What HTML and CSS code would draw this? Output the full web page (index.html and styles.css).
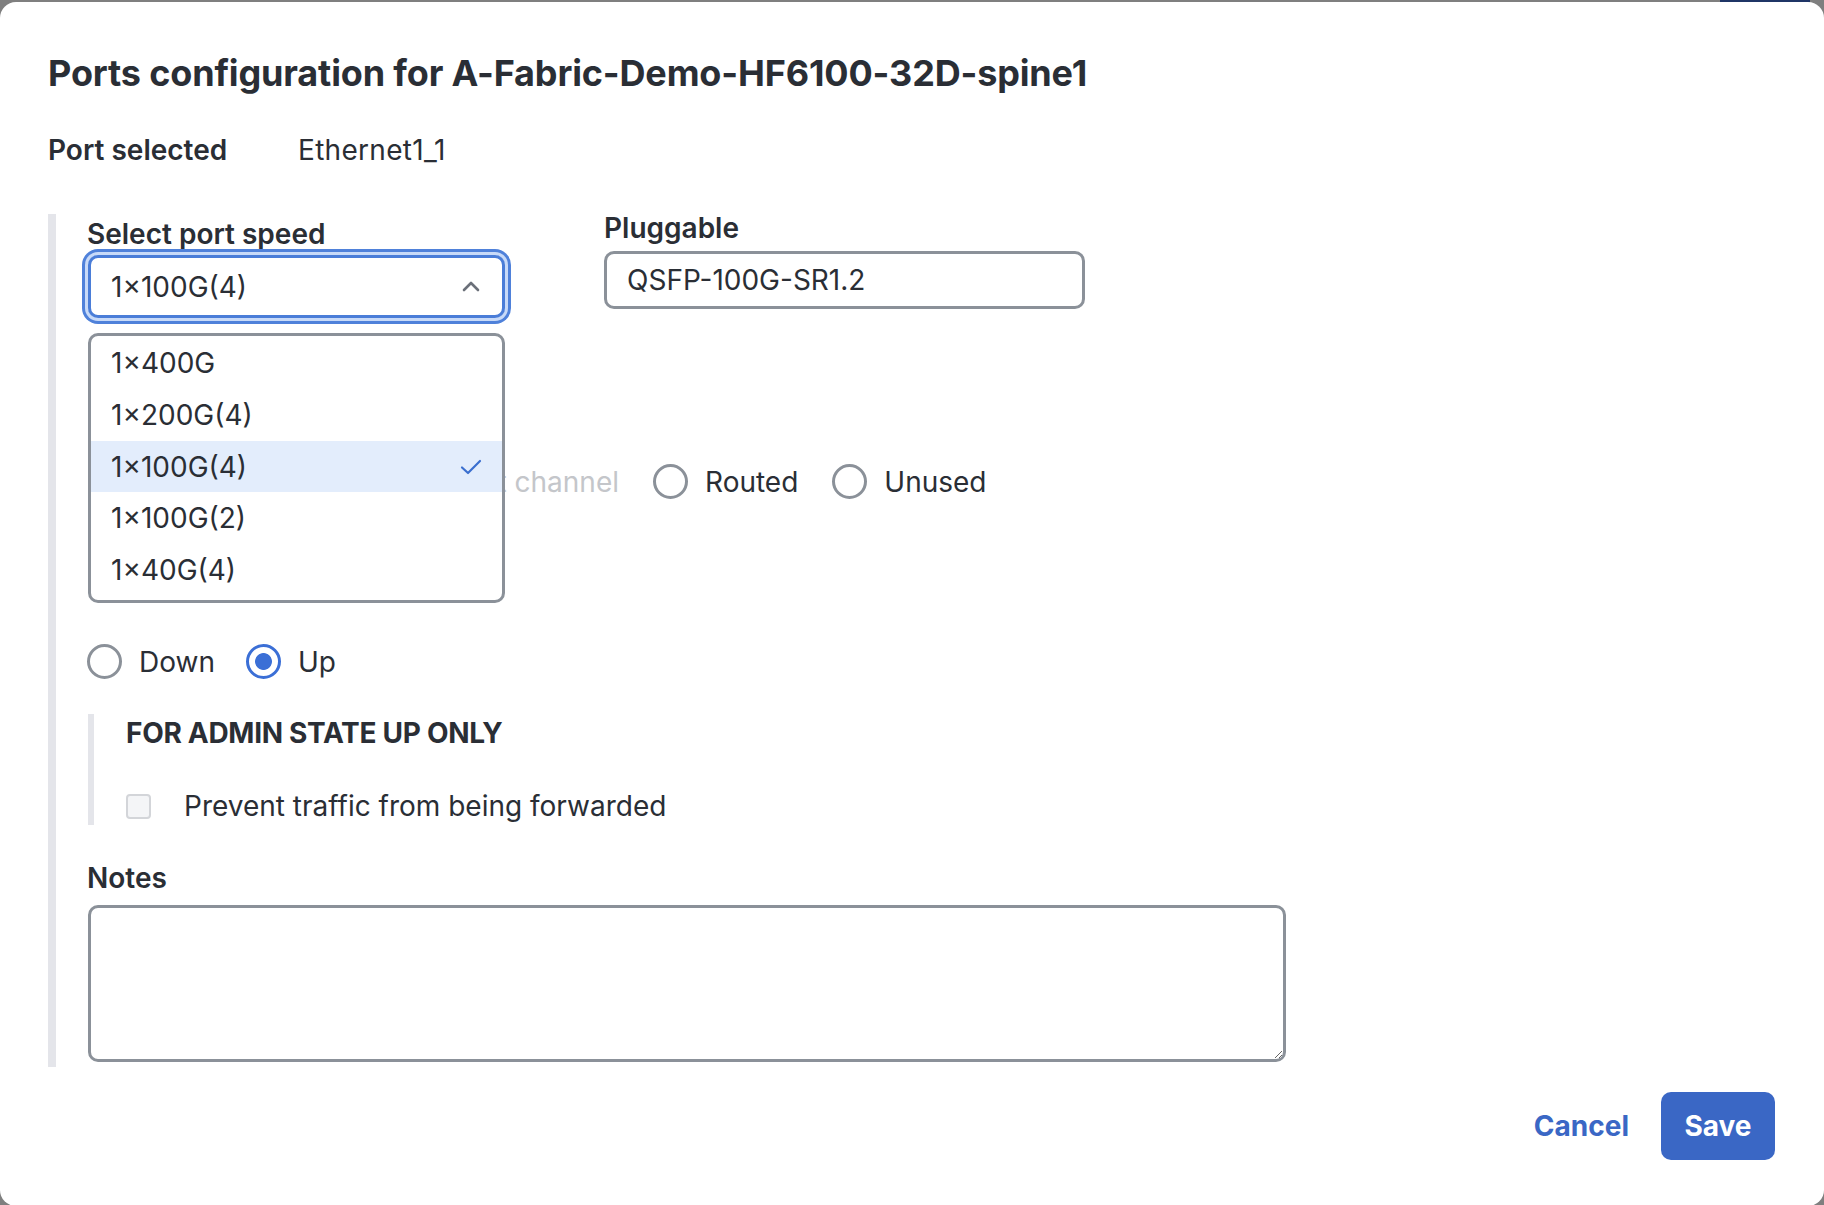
FILE: index.html
```html
<!DOCTYPE html>
<html lang="en">
<head>
<meta charset="utf-8">
<title>Ports configuration</title>
<link rel="stylesheet" href="styles.css">
</head>
<body>
<div class="backdrop">
  <div class="header-btn"></div>
  <div class="modal" role="dialog" aria-labelledby="dlg-title">
    <h1 class="title" id="dlg-title">Ports configuration for A-Fabric-Demo-HF6100-32D-spine1</h1>
    <div class="port-selected">
      <span class="ps-label">Port selected</span>
      <span class="ps-value">Ethernet1_1</span>
    </div>

    <div class="form-section">
      <div class="top-row">
        <div class="field field-speed">
          <div class="field-label">Select port speed</div>
          <div class="select-wrap">
            <div class="select is-focused">
              <span class="select-value">1×100G(4)</span>
              <svg class="chevron" width="18" height="11" viewBox="0 0 18 11"><path d="M2 9 L9 2 L16 9" fill="none" stroke="#6b7079" stroke-width="2.6" stroke-linecap="round" stroke-linejoin="round"/></svg>
            </div>
            <ul class="menu">
              <li class="menu-item">1×400G</li>
              <li class="menu-item">1×200G(4)</li>
              <li class="menu-item is-selected">1×100G(4)
                <svg class="check" width="22" height="16" viewBox="0 0 22 16"><path d="M2 8.5 L8 14 L20 2" fill="none" stroke="#3b6fcf" stroke-width="2.2" stroke-linecap="round" stroke-linejoin="round"/></svg>
              </li>
              <li class="menu-item">1×100G(2)</li>
              <li class="menu-item">1×40G(4)</li>
            </ul>
          </div>
        </div>
        <div class="field field-pluggable">
          <div class="field-label">Pluggable</div>
          <input class="text-input" type="text" value="QSFP-100G-SR1.2" readonly>
        </div>
      </div>

      <div class="radio-row row-role">
        <span class="radio-opt is-disabled"><span class="radio"></span><span class="radio-text">Port channel</span></span>
        <span class="radio-opt"><span class="radio"></span><span class="radio-text">Routed</span></span>
        <span class="radio-opt"><span class="radio"></span><span class="radio-text">Unused</span></span>
      </div>

      <div class="radio-row row-admin">
        <span class="radio-opt"><span class="radio"></span><span class="radio-text">Down</span></span>
        <span class="radio-opt"><span class="radio is-checked"></span><span class="radio-text">Up</span></span>
      </div>

      <div class="nested">
        <div class="nested-title">FOR ADMIN STATE UP ONLY</div>
        <label class="check-row">
          <span class="checkbox"></span>
          <span class="check-text">Prevent traffic from being forwarded</span>
        </label>
      </div>

      <div class="notes-label">Notes</div>
      <textarea class="notes"></textarea>
    </div>

    <div class="footer">
      <button class="btn btn-link" type="button">Cancel</button>
      <button class="btn btn-primary" type="button">Save</button>
    </div>
  </div>
</div>
</body>
</html>
```

FILE: styles.css
```css
* { box-sizing: border-box; }
html, body { margin: 0; padding: 0; }
body {
  background: #7f7f7f;
  font-family: Inter, "Noto Sans", "Liberation Sans", sans-serif;
  color: #2a2e35;
  overflow: hidden;
}
.backdrop {
  position: relative;
  width: 1824px;
  height: 1205px;
  padding-top: 2px;
}
.header-btn {
  position: absolute;
  top: 0;
  left: 1720px;
  width: 90px;
  height: 2px;
  background: #1f3566;
}
.modal {
  position: relative;
  background: #fff;
  height: 1204px;
  border-radius: 16px;
  padding: 49px 49px 0 48px;
}
.title {
  margin: 0;
  font-size: 36px;
  line-height: 44px;
  font-weight: 700;
  letter-spacing: -0.15px;
  color: #2a2e35;
}
.port-selected {
  display: flex;
  margin-top: 39px;
  height: 32px;
  align-items: center;
  font-size: 28px;
}
.ps-label { width: 250px; font-weight: 600; }
.ps-value { font-weight: 400; letter-spacing: 0.3px; }

.form-section {
  margin-top: 48px;
  border-left: 8px solid #e4e5ea;
  padding: 0 0 5px 31px;
}
.top-row {
  display: flex;
  align-items: flex-start;
  gap: 99px;
}
.field-label {
  font-size: 28px;
  line-height: 28px;
  font-weight: 600;
  color: #2a2e35;
}
.field-speed { padding-top: 6px; width: 418px; }
.select-wrap { position: relative; margin-top: 7px; margin-left: 1px; }
.select {
  height: 63px;
  width: 417px;
  border: 3px solid #4a7dd8;
  border-radius: 10px;
  box-shadow: 0 0 0 3px #c8daf8, 0 0 0 6px #4f81da;
  display: flex;
  align-items: center;
  justify-content: space-between;
  padding: 0 16px 0 20px;
  font-size: 28px;
}
.chevron { margin-right: 6px; }
.menu {
  position: absolute;
  top: 78px;
  left: 0;
  width: 417px;
  margin: 0;
  padding: 1px 0 4px;
  list-style: none;
  background: #fff;
  border: 3px solid #8b9199;
  border-radius: 10px;
  z-index: 5;
}
.menu-item {
  height: 52px;
  display: flex;
  align-items: center;
  justify-content: space-between;
  padding: 0 20px 0 20px;
  font-size: 28px;
}
.menu-item.is-selected { background: #e3edfc; height: 51px; }

.field-pluggable { width: 481px; }
.text-input {
  display: block;
  margin-top: 9px;
  width: 481px;
  height: 58px;
  border: 3px solid #8b9199;
  border-radius: 10px;
  padding: 0 20px;
  font-family: inherit;
  font-size: 28px;
  color: #2a2e35;
  background: #fff;
  outline: none;
}

.radio-row {
  display: flex;
  align-items: center;
  gap: 34px;
  height: 35px;
  font-size: 28px;
}
.radio-opt { display: flex; align-items: center; gap: 17px; }
.radio {
  width: 35px;
  height: 35px;
  border: 3px solid #8b9199;
  border-radius: 50%;
  background: #fff;
  flex: none;
}
.radio.is-checked {
  border-color: #3b6fd6;
  background: radial-gradient(circle, #3b6fd6 0 8px, #fff 8.8px);
}
.radio-opt.is-disabled .radio { border-color: #d3d5d9; }
.radio-opt.is-disabled .radio-text { color: #c4c6ca; }
.row-role { margin-top: 146px; margin-left: 313px; }

.row-admin { margin-top: 145px; gap: 31px; }

.nested {
  margin-top: 35px;
  margin-left: 1px;
  border-left: 6px solid #e4e5ea;
  padding: 5px 0 7px 32px;
}
.nested-title {
  font-size: 28px;
  line-height: 28px;
  font-weight: 700;
  letter-spacing: -0.3px;
}
.check-row {
  display: flex;
  align-items: center;
  gap: 33px;
  margin-top: 47px;
  height: 24px;
  font-size: 28px;
}
.checkbox {
  width: 25px;
  height: 25px;
  border: 2px solid #d3d5d9;
  border-radius: 4px;
  background: #f4f5f7;
  flex: none;
}

.notes-label {
  margin-top: 39px;
  font-size: 28px;
  line-height: 28px;
  font-weight: 600;
}
.notes {
  display: block;
  margin-top: 13px;
  margin-left: 1px;
  width: 1198px;
  height: 157px;
  border: 3px solid #8b9199;
  border-radius: 10px;
  font-family: inherit;
  font-size: 28px;
  outline: none;
}

.footer {
  margin-top: 25px;
  display: flex;
  justify-content: flex-end;
  align-items: center;
  gap: 32px;
}
.btn {
  font-family: inherit;
  font-size: 28px;
  font-weight: 700;
  border: none;
  cursor: pointer;
}
.btn-link {
  background: none;
  color: #3a67c5;
  padding: 0;
}
.btn-primary {
  background: #3a67c5;
  color: #fff;
  width: 114px;
  height: 68px;
  border-radius: 10px;
  padding: 0;
}
```
